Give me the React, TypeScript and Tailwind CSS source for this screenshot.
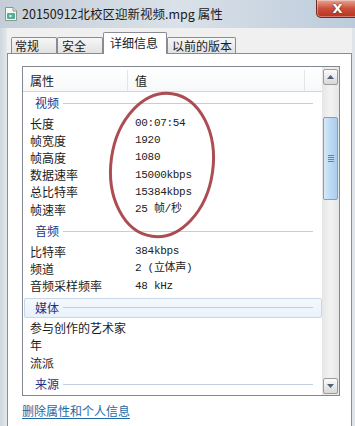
const videoRows = [
  ["长度", "00:07:54"],
  ["帧宽度", "1920"],
  ["帧高度", "1080"],
  ["数据速率", "15000kbps"],
  ["总比特率", "15384kbps"],
  ["帧速率", "25 帧/秒"],
];

const audioRows = [
  ["比特率", "384kbps"],
  ["频道", "2 (立体声)"],
  ["音频采样频率", "48 kHz"],
];

const mediaRows = [
  ["参与创作的艺术家", ""],
  ["年", ""],
  ["流派", ""],
];

function TitleBar() {
  return (
    <div className="flex h-[28px] items-start bg-gradient-to-r from-[#c4ced8] via-[#dae1e8] to-[#bccbdb]">
      <svg className="ml-[5px] mt-[7px] h-[14px] w-[12px]" viewBox="0 0 12 14">
        <path d="M0.5 0.5 H8 L11.5 4 V13.5 H0.5 Z" fill="#f3f6f1" stroke="#8b978c" />
        <path d="M8 0.5 V4 H11.5" fill="#dfe5dc" stroke="#8b978c" />
        <rect x="2" y="6" width="8" height="6" rx="1" fill="#4fae9a" />
        <path d="M4.5 7.5 L7.5 9 L4.5 10.5 Z" fill="#e8f6f1" />
      </svg>
      <div className="ml-[5px] mt-[5px] text-[12.5px] leading-[18px] text-[#1a1a1a]">20150912北校区迎新视频.mpg 属性</div>
      <div className="ml-auto -mr-[4px] flex h-[18px] w-[43px] items-center justify-center rounded-bl-[5px] border border-t-0 border-[#6e2a22] bg-gradient-to-b from-[#e8a493] via-[#c9503c] to-[#b8331f] shadow-[inset_0_0_0_1px_rgba(255,255,255,0.35)]">
        <span className="font-['DejaVu_Sans',sans-serif] text-[13px] font-bold leading-none text-white [text-shadow:0_0_2px_#5a1a10]">X</span>
      </div>
    </div>
  );
}

function Tabs() {
  const tabs = [
    { label: "常规", w: "w-[46px] pl-[3px]" },
    { label: "安全", w: "w-[46px] pl-[4px]" },
    { label: "详细信息", w: "w-[64px] pl-[6px]", active: true },
    { label: "以前的版本", w: "w-[69px] pl-[4px]" },
  ];
  return (
    <div className="flex h-[25px] items-end pl-[4px]">
      {tabs.map((t) =>
        t.active ? (
          <div
            key={t.label}
            className={`${t.w} relative z-10 -mb-px flex h-[22px] items-center rounded-t-[2px] border border-b-0 border-[#898c95] bg-white pb-[2px]`}
          >
            {t.label}
          </div>
        ) : (
          <div
            key={t.label}
            className={`${t.w} flex h-[16px] items-center rounded-t-[2px] border border-b-0 border-[#898c95] bg-gradient-to-b from-[#f6f6f6] to-[#e2e2e2] pt-px`}
          >
            {t.label}
          </div>
        )
      )}
    </div>
  );
}

function GroupHeader({ label, first, hot }: { label: string; first?: boolean; hot?: boolean }) {
  if (hot) {
    return (
      <div className="ml-px mb-[2px] mt-[3px] flex h-[20px] items-center rounded-[2px] border border-[#c8d7ea] bg-gradient-to-b from-[#f5f9fe] to-[#e9f1fb] pl-[10px]">
        <span className="text-[#1e3287]">{label}</span>
        <div className="ml-[4px] mr-[8px] h-px flex-1 bg-[#c3cedd]" />
      </div>
    );
  }
  return (
    <div className={`${first ? "mt-px" : "mt-[3px]"} mb-[2px] flex h-[20px] items-center pl-[12px]`}>
      <span className="text-[#1e3287]">{label}</span>
      <div className="ml-[4px] mr-[9px] h-px flex-1 bg-[#c3cedd]" />
    </div>
  );
}

function Row({ label, value }: { label: string; value: string }) {
  return (
    <div className="flex h-[17.2px] items-center">
      <div className="w-[105px] pl-[7px]">{label}</div>
      <div className="pl-[7px] font-['Liberation_Mono','Noto_Sans_CJK_SC',monospace] text-[11px] tracking-[-0.3px] text-[#222]">{value}</div>
    </div>
  );
}

function ScrollButton({ down }: { down?: boolean }) {
  return (
    <div className="mx-px flex h-[16px] items-center justify-center rounded-[2px] border border-[#9c9c9c] bg-gradient-to-b from-[#fbfbfb] to-[#d8d8d8]">
      <svg className="h-[4px] w-[7px]" viewBox="0 0 7 4">
        <path d={down ? "M0 0 H7 L3.5 4 Z" : "M0 4 H7 L3.5 0 Z"} fill="#4d5e7a" />
      </svg>
    </div>
  );
}

function ScrollBar() {
  return (
    <div className="flex w-[17px] flex-col bg-gradient-to-r from-[#e6e6e6] via-[#f2f2f2] to-[#e6e6e6]">
      <div className="mt-[2px]">
        <ScrollButton />
      </div>
      <div className="h-[32px]" />
      <div className="mx-px flex h-[83px] items-center justify-center rounded-[2px] border border-[#7ba2c6] bg-gradient-to-r from-[#d6e9f8] via-[#bcdaf3] to-[#a9cdee]">
        <div className="flex flex-col gap-[1px]">
          <div className="h-px w-[6px] bg-[#5f86ab]" />
          <div className="h-px w-[6px] bg-[#5f86ab]" />
          <div className="h-px w-[6px] bg-[#5f86ab]" />
          <div className="h-px w-[6px] bg-[#5f86ab]" />
        </div>
      </div>
      <div className="flex-1" />
      <div className="mb-px">
        <ScrollButton down />
      </div>
    </div>
  );
}

function ListView() {
  return (
    <div className="ml-[14px] mt-[12px] flex h-[330px] w-[318px] border border-[#828790] bg-white">
      <div className="flex-1 overflow-hidden">
        <div className="flex h-[25px] border-b border-[#d5d5d5] bg-gradient-to-b from-white to-[#f7f8f9] pt-[3px]">
          <div className="flex w-[105px] items-center border-r border-[#e2e5ea] pl-[7px]">属性</div>
          <div className="flex w-[177px] items-center border-r border-[#e2e5ea] pl-[7px]">值</div>
        </div>
        <GroupHeader label="视频" first />
        {videoRows.map(([l, v]) => (
          <Row key={l} label={l} value={v} />
        ))}
        <GroupHeader label="音频" />
        {audioRows.map(([l, v]) => (
          <Row key={l} label={l} value={v} />
        ))}
        <GroupHeader label="媒体" hot />
        {mediaRows.map(([l, v]) => (
          <Row key={l} label={l} value={v} />
        ))}
        <GroupHeader label="来源" />
      </div>
      <ScrollBar />
    </div>
  );
}

export default function App() {
  return (
    <div className="relative h-[426px] w-[355px] overflow-hidden bg-[#d9dfe6] font-['Noto_Sans_CJK_SC','Noto_Sans',sans-serif] text-[12px] leading-none text-[#1b1b1b]">
      <TitleBar />
      <div className="flex h-[398px]">
        <div className="w-[7px] bg-gradient-to-r from-[#cfd6de] to-[#e4e8ec]" />
        <div className="flex flex-1 flex-col bg-[#f0f0f0]">
          <Tabs />
          <div className="flex-1 border border-b-0 border-[#898c95] bg-white">
            <ListView />
            <div className="ml-[14px] mt-[9px] text-[#1d6aa6] underline underline-offset-2">删除属性和个人信息</div>
          </div>
        </div>
        <div className="w-[3px] bg-[#dfe4ea]" />
      </div>
      <svg className="pointer-events-none absolute left-0 top-0" width="355" height="426">
        <ellipse
          cx="162"
          cy="165"
          rx="51"
          ry="72"
          transform="rotate(8 162 165)"
          fill="none"
          stroke="#a23a40"
          strokeWidth="3"
          opacity="0.9"
        />
      </svg>
    </div>
  );
}
